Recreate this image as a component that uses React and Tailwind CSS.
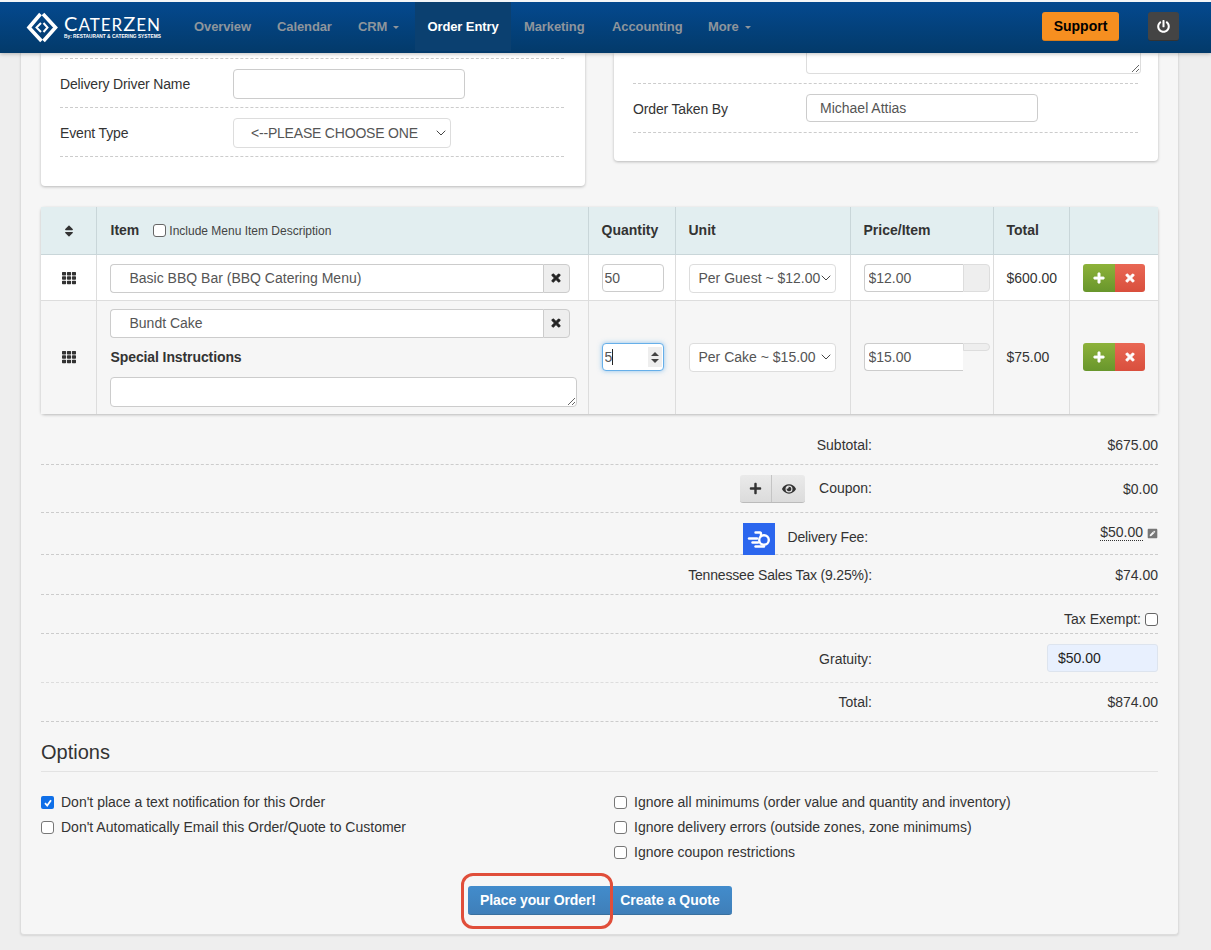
import React from "react";
import { FaTh, FaSort, FaTimes, FaPlus, FaEye, FaPowerOff, FaPenSquare } from "react-icons/fa";
import { ChevronDown } from "lucide-react";

const navItems = [
  { label: "Overview", w: "w-[83px]" },
  { label: "Calendar", w: "w-[81px]" },
  { label: "CRM", w: "w-[70px]", caret: true },
];
const navItemsRight = [
  { label: "Marketing", w: "w-[88px]" },
  { label: "Accounting", w: "w-[96px]" },
  { label: "More", w: "w-[70px]", caret: true },
];

function NavLink({ item }) {
  return (
    <a className={`${item.w} flex items-center pl-[13px] text-[13px] font-bold tracking-[-0.1px] text-[#8e959c]`}>
      {item.label}
      {item.caret && <span className="ml-[6px] mt-[1px] border-x-[3.5px] border-t-[3.5px] border-x-transparent border-t-[#8e959c]" />}
    </a>
  );
}

function Logo() {
  return (
    <div className="flex items-start ml-[26px] w-[155px] pt-[10px]">
      <svg width="32" height="32" viewBox="0 0 32 32" fill="none" stroke="#fff">
        <path d="M14.5 2 L3 15.5 L15.5 29" strokeWidth="3.6" />
        <path d="M17 2 L29.5 15.5 L17.5 29" strokeWidth="3.6" />
        <path d="M15 11 L10.5 15.5 L15 20" strokeWidth="2" />
        <path d="M17.5 11 L21.5 15.5 L17.5 20" strokeWidth="2" />
      </svg>
      <div className="ml-[6px] text-white leading-none">
        <div className="mt-[1px] h-[20px] flex items-baseline whitespace-nowrap text-[17px] tracking-[1px] font-normal font-['Lato',sans-serif]">
          <span className="text-[20px]">C</span>ATER<span className="text-[20px]">Z</span>EN
        </div>
        <div className="mt-[1px] text-[4.8px] leading-[6px] font-bold whitespace-nowrap">By: RESTAURANT &amp; CATERING SYSTEMS</div>
      </div>
    </div>
  );
}

function Navbar() {
  return (
    <header className="relative z-10 h-[53px] border-t-2 border-[#f4f6f8] bg-gradient-to-b from-[#04498f] to-[#033a6a] shadow-[0_1px_4px_rgba(0,0,0,0.25)] flex">
      <Logo />
      <nav className="flex h-[49px]">
        {navItems.map((n) => <NavLink key={n.label} item={n} />)}
        <a className="w-[96px] flex items-center justify-center bg-[#0b4070] text-[13px] font-bold tracking-[-0.1px] text-white">Order Entry</a>
        {navItemsRight.map((n) => <NavLink key={n.label} item={n} />)}
      </nav>
      <button className="ml-[277px] mt-[10px] h-[29px] w-[77px] rounded-[3px] bg-[#f68f20] border-b border-[#d87c18] text-[14px] font-bold text-black">Support</button>
      <button className="ml-[29px] mt-[10px] h-[29px] w-[31px] rounded-[3px] bg-[#444] border-b border-[#333] flex items-center justify-center text-white">
        <FaPowerOff size={13} />
      </button>
    </header>
  );
}

function Field({ label, children, className = "h-[49px] pt-[2px]" }) {
  return (
    <div className={`${className} flex items-center border-b border-dashed border-[#ccc]`}>
      <span className="w-[173px] shrink-0 tracking-[-0.15px]">{label}</span>
      {children}
    </div>
  );
}

function Select({ text, className, pad = "pl-[9px]", tight = "" }) {
  return (
    <div className={`${className} relative`}>
      <select className={`appearance-none w-full h-full bg-white border border-[#ddd] rounded-[4px] ${pad} ${tight} text-[#555] outline-none`} defaultValue={text}>
        <option>{text}</option>
      </select>
      <ChevronDown size={16} strokeWidth={1.5} className="absolute right-[2px] top-1/2 -translate-y-1/2 text-[#444] pointer-events-none" />
    </div>
  );
}

function TopCards() {
  return (
    <div className="flex gap-[29px] items-start">
      <section className="w-[544px] h-[133px] bg-white rounded-b-[4px] shadow-[0_1px_3px_rgba(0,0,0,0.25)] pl-[19px] pr-[21px]">
        <div className="h-[6px] border-b border-dashed border-[#ccc]" />
        <Field label="Delivery Driver Name">
          <input className="w-[232px] h-[30px] border border-[#ccc] rounded-[4px] bg-white" />
        </Field>
        <Field label="Event Type">
          <Select text="<--PLEASE CHOOSE ONE" className="w-[218px] h-[30px]" pad="pl-[17px]" tight="tracking-[-0.2px]" />
        </Field>
      </section>
      <section className="w-[544px] h-[108px] bg-white rounded-b-[4px] shadow-[0_1px_3px_rgba(0,0,0,0.25)] pl-[19px] pr-[20px]">
        <div className="h-[31px] flex items-start border-b border-dashed border-[#ccc]">
          <textarea className="ml-[173px] w-[335px] shrink-0 h-[21px] border border-t-0 border-[#ddd] rounded-b-[4px] block outline-none" />
        </div>
        <Field label="Order Taken By">
          <input className="w-[232px] h-[28px] -mt-[2px] border border-[#ccc] rounded-[4px] px-[13px] text-[#555]" defaultValue="Michael Attias" />
        </Field>
      </section>
    </div>
  );
}

function ItemInput({ value }) {
  return (
    <div className="flex w-[460px] h-[29px]">
      <input className="flex-1 min-w-0 border border-[#ccc] border-r-0 rounded-l-[4px] bg-white pl-[19px] text-[#555] outline-none" defaultValue={value} />
      <span className="w-[27px] flex items-center justify-center bg-[#eee] border border-[#ccc] rounded-r-[4px] text-[#222]">
        <FaTimes size={12} stroke="currentColor" strokeWidth={40} />
      </span>
    </div>
  );
}

function RowButtons() {
  return (
    <div className="flex h-[28px] w-[62px]">
      <button className="w-[32px] rounded-l-[3px] bg-gradient-to-b from-[#8db23a] to-[#68962c] flex items-center justify-center text-white"><FaPlus size={12} stroke="currentColor" strokeWidth={30} /></button>
      <button className="w-[30px] rounded-r-[3px] bg-gradient-to-b from-[#e96754] to-[#d94f3d] flex items-center justify-center text-white"><FaTimes size={12} stroke="currentColor" strokeWidth={40} /></button>
    </div>
  );
}

const th = "border-r border-[#c9d6d9] last:border-r-0 px-[13px] pt-[1px] text-left font-bold";
const td = "border-r border-[#ddd] last:border-r-0 px-[13px] align-middle";
const td1 = "border-r border-[#ddd] last:border-r-0 px-[13px] pt-[2px] align-middle";

function ItemsTable() {
  return (
    <table className="mt-[21px] w-[1117px] table-fixed border-collapse shadow-[0_1px_3px_rgba(0,0,0,0.25)] rounded-[4px]">
      <colgroup>
        <col className="w-[55px]" />
        <col className="w-[492px]" />
        <col className="w-[87px]" />
        <col className="w-[175px]" />
        <col className="w-[143px]" />
        <col className="w-[76px]" />
        <col className="w-[89px]" />
      </colgroup>
      <thead>
        <tr className="h-[47px] bg-[#e2eef0] border-b border-[#c9d6d9]">
          <th className={th}><FaSort size={14} className="ml-[8px] text-[#333]" /></th>
          <th className={th}>
            <span className="flex items-center">
              <span className="ml-[1px]">Item</span>
              <span className="ml-[14px] mr-[3px] w-[13px] h-[13px] rounded-[3px] border border-[#666] bg-white" />
              <span className="font-normal text-[12px] text-[#444]">Include Menu Item Description</span>
            </span>
          </th>
          <th className={th}>Quantity</th>
          <th className={th}>Unit</th>
          <th className={th}>Price/Item</th>
          <th className={th}>Total</th>
          <th className={th}></th>
        </tr>
      </thead>
      <tbody>
        <tr className="h-[46px] bg-white border-b border-[#ddd]">
          <td className={td1}><FaTh size={14} className="ml-[8px] text-[#333]" /></td>
          <td className={td1}><ItemInput value="Basic BBQ Bar (BBQ Catering Menu)" /></td>
          <td className={td1}>
            <input className="w-[62px] h-[28px] border border-[#ccc] rounded-[4px] pl-[2px] text-[#555] outline-none block" defaultValue="50" />
          </td>
          <td className={td1}><Select text="Per Guest ~ $12.00" className="w-[147px] h-[29px]" /></td>
          <td className={td1}>
            <div className="flex h-[28px] w-[126px]">
              <input className="w-[99px] border border-[#ccc] border-r-0 rounded-l-[4px] pl-[4px] text-[#555] outline-none" defaultValue="$12.00" />
              <span className="w-[27px] bg-[#eee] border border-[#ddd] rounded-r-[4px]" />
            </div>
          </td>
          <td className={td1}>$600.00</td>
          <td className={td1}><RowButtons /></td>
        </tr>
        <tr className="h-[114px] bg-[#f6f6f6]">
          <td className={td}><FaTh size={14} className="ml-[8px] text-[#333]" /></td>
          <td className={td}>
            <div className="pt-[1px]"><ItemInput value="Bundt Cake" /></div>
            <div className="ml-[1px] mt-[9px] font-bold leading-[20px] tracking-[-0.1px]">Special Instructions</div>
            <textarea className="mt-[10px] block w-[467px] h-[30px] border border-[#ccc] rounded-[4px] bg-white outline-none" />
          </td>
          <td className={td}>
            <div className="relative w-[62px] h-[28px]">
              <input className="w-full h-full border border-[#66afe9] rounded-[4px] pl-[2px] text-[#555] bg-white outline-none shadow-[0_0_5px_rgba(102,175,233,0.7)]" defaultValue="5" />
              <span className="absolute left-[10px] top-[6px] w-[1px] h-[16px] bg-[#222]" />
              <span className="absolute right-[2px] top-[4px] w-[14px] h-[20px] bg-[#eee] flex flex-col items-center justify-center gap-[3px]">
                <span className="border-x-[4px] border-b-[4px] border-x-transparent border-b-[#444]" />
                <span className="border-x-[4px] border-t-[4px] border-x-transparent border-t-[#444]" />
              </span>
            </div>
          </td>
          <td className={td}><Select text="Per Cake ~ $15.00" className="w-[147px] h-[29px]" /></td>
          <td className={td}>
            <div className="flex items-start h-[28px] w-[126px]">
              <input className="w-[99px] h-[28px] border border-[#ccc] border-r-0 rounded-l-[4px] pl-[4px] text-[#555] bg-white outline-none" defaultValue="$15.00" />
              <span className="w-[27px] h-[8px] bg-[#eee] border border-[#ddd] rounded-r-[4px]" />
            </div>
          </td>
          <td className={td}>$75.00</td>
          <td className={td}><RowButtons /></td>
        </tr>
      </tbody>
    </table>
  );
}

function SummaryRow({ height, label, value, extra, labelClass = "" }) {
  return (
    <div className={`${height} flex items-center border-b border-dashed border-[#ccc]`}>
      <div className={`w-[831px] flex justify-end items-center ${labelClass}`}>
        {extra}
        {label}
      </div>
      <div className="flex-1 flex justify-end items-center">{value}</div>
    </div>
  );
}

function DeliveryIcon() {
  return (
    <svg width="32" height="32" viewBox="0 0 32 32" className="mr-[12px] -mb-[1px] self-end">
      <rect width="32" height="32" fill="#2b66ee" />
      <g stroke="#fff" strokeWidth="2.4" strokeLinecap="round" fill="none">
        <path d="M12.5 9.5 H 17 Q 18 9.5 18 11 V 13" />
        <circle cx="21" cy="17" r="4.8" />
        <path d="M6 15.5 H 14" />
        <path d="M9.5 19.5 H 15" />
        <path d="M12.5 23.5 H 21" />
      </g>
    </svg>
  );
}

function Summary() {
  return (
    <div>
      <SummaryRow height="h-[51px] pt-[12px]" label="Subtotal:" value="$675.00" />
      <SummaryRow
        height="h-[48px] pt-[1px]"
        label={<span className="-mt-[1px]">Coupon:</span>}
        value={<span className="mt-[1px]">$0.00</span>}
        extra={
          <span className="flex mr-[14px] h-[28px] w-[65px] rounded-[3px] bg-gradient-to-b from-[#eaeaea] to-[#dcdcdc] border-b border-[#bbb] text-[#333]">
            <span className="w-[32px] flex items-center justify-center border-r border-[#c4c4c4]"><FaPlus size={13} /></span>
            <span className="flex-1 flex items-center justify-center"><FaEye size={14} /></span>
          </span>
        }
      />
      <SummaryRow
        height="h-[42px]"
        label={<span className="mr-[4px] mt-[8px] tracking-[-0.15px]">Delivery Fee:</span>}
        labelClass="h-full"
        extra={<DeliveryIcon />}
        value={
          <span className="flex items-center -mt-[1px]">
            <span className="border-b border-dotted border-[#333] leading-[15px]">$50.00</span>
            <FaPenSquare size={11} className="ml-[4px] text-[#777]" />
          </span>
        }
      />
      <SummaryRow height="h-[40px] pt-[2px]" label={<span className="tracking-[-0.18px]">Tennessee Sales Tax (9.25%):</span>} value="$74.00" />
      <div className="h-[39px] pt-[11px] flex items-center justify-end border-b border-dashed border-[#ccc]">
        Tax Exempt:
        <span className="ml-[4px] w-[13px] h-[13px] rounded-[3px] border border-[#666] bg-white" />
      </div>
      <SummaryRow
        height="h-[49px] border-[#ddd]"
        label={<span className="mt-[2px]">Gratuity:</span>}
        value={<input className="w-[111px] h-[28px] border border-[#dde4ee] rounded-[3px] bg-[#e8f0fe] pl-[10px] text-[#222] outline-none" defaultValue="$50.00" />}
      />
      <SummaryRow height="h-[39px]" label="Total:" value="$874.00" />
    </div>
  );
}

function Option({ label, checked }) {
  return (
    <label className="h-[25px] flex items-center">
      {checked ? (
        <span className="w-[13px] h-[13px] rounded-[2px] bg-[#0f6fe8] flex items-center justify-center">
          <svg width="10" height="10" viewBox="0 0 10 10" fill="none" stroke="#fff" strokeWidth="1.8">
            <path d="M2 5.2 L4.2 7.6 L8 2.2" />
          </svg>
        </span>
      ) : (
        <span className="w-[13px] h-[13px] rounded-[3px] border border-[#777] bg-white" />
      )}
      <span className="ml-[7px]">{label}</span>
    </label>
  );
}

function Options() {
  return (
    <div>
      <h3 className="h-[50px] pt-[16px] text-[20px] leading-[28px] border-b border-[#e3e3e3]">Options</h3>
      <div className="mt-[18px] flex h-[74px]">
        <div className="w-[573px]">
          <Option checked label="Don't place a text notification for this Order" />
          <Option label="Don't Automatically Email this Order/Quote to Customer" />
        </div>
        <div>
          <Option label="Ignore all minimums (order value and quantity and inventory)" />
          <Option label="Ignore delivery errors (outside zones, zone minimums)" />
          <Option label="Ignore coupon restrictions" />
        </div>
      </div>
      <div className="mt-[22px] flex justify-center">
        <div className="relative flex">
          <button className="w-[141px] h-[29px] rounded-l-[3px] bg-gradient-to-b from-[#428ccc] to-[#3f7fb9] border-b border-[#39709f] font-bold text-white tracking-[-0.1px]">Place your Order!</button>
          <button className="w-[123px] h-[29px] rounded-r-[3px] bg-gradient-to-b from-[#428ccc] to-[#3f7fb9] border-b border-[#39709f] font-bold text-white">Create a Quote</button>
          <span className="absolute -left-[7px] -top-[13px] w-[152px] h-[56px] border-[3px] border-[#e04e3a] rounded-[12px]" />
        </div>
      </div>
    </div>
  );
}

export default function App() {
  return (
    <div className="h-[950px] overflow-hidden bg-[#eee] font-['Liberation_Sans',Arial,sans-serif] text-[14px] text-[#333]">
      <Navbar />
      <main className="ml-5 w-[1159px] h-[882px] bg-[#f6f6f6] border-x border-b border-[#ddd] rounded-b-[4px] px-5 shadow-[0_1px_2px_rgba(0,0,0,0.1)]">
        <TopCards />
        <ItemsTable />
        <Summary />
        <Options />
      </main>
    </div>
  );
}
